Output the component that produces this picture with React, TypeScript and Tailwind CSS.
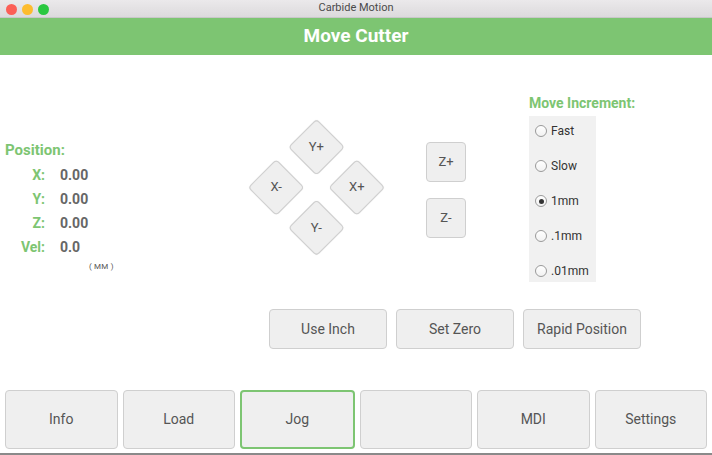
import React from 'react';

const GREEN = 'text-[#7dc572]';

const positions = [
  { label: 'X:', value: '0.00' },
  { label: 'Y:', value: '0.00' },
  { label: 'Z:', value: '0.00' },
  { label: 'Vel:', value: '0.0' },
];

const increments = [
  { label: 'Fast', checked: false },
  { label: 'Slow', checked: false },
  { label: '1mm', checked: true },
  { label: '.1mm', checked: false },
  { label: '.01mm', checked: false },
];

const tabs = ['Info', 'Load', 'Jog', '', 'MDI', 'Settings'];

function Radio({ checked }: { checked: boolean }) {
  return (
    <span className="flex h-[12px] w-[12px] items-center justify-center rounded-full border border-[#9a9a9a] bg-gradient-to-b from-white to-[#f2f2f2]">
      {checked && <span className="h-[5px] w-[5px] rounded-full bg-[#333]" />}
    </span>
  );
}

function Diamond({ label }: { label: string }) {
  return (
    <div className="flex h-[40px] w-[40px] items-center justify-center rounded-[4px] border border-[#cfcfcf] bg-[#efefef] shadow-[0_0_1px_rgba(0,0,0,0.15)]">
      <span className="-rotate-45 text-[13px] text-[#555]">{label}</span>
    </div>
  );
}

export default function App() {
  return (
    <div className="flex h-[455px] w-[712px] flex-col overflow-hidden bg-white font-['Roboto',sans-serif]">
      {/* window title bar */}
      <div className="relative flex h-[18px] shrink-0 items-center justify-center border-b border-[#c9c7c9] bg-gradient-to-b from-[#ebe9eb] to-[#dcdadc]">
        <div className="absolute left-[6px] top-[4px] flex gap-[5px]">
          <span className="h-[11px] w-[11px] rounded-full bg-[#fc5f57]" />
          <span className="h-[11px] w-[11px] rounded-full bg-[#fdbc2e]" />
          <span className="h-[11px] w-[11px] rounded-full bg-[#2ac840]" />
        </div>
        <span className="text-[11px] text-[#4a4a4a]">Carbide Motion</span>
      </div>

      {/* header */}
      <div className="flex h-[37px] shrink-0 items-center justify-center bg-[#7dc572]">
        <span className="text-[19px] font-bold text-white">Move Cutter</span>
      </div>

      {/* main area */}
      <div className="flex h-[254px] shrink-0">
        {/* position readout */}
        <div className="w-[245px] pl-[5px] pt-[85px]">
          <div className={`mb-[3px] h-[20px] text-[15px] font-bold leading-[20px] ${GREEN}`}>Position:</div>
          {positions.map((p) => (
            <div key={p.label} className="flex h-[24px] items-center">
              <span className={`w-[40px] text-right text-[14px] font-bold ${GREEN}`}>{p.label}</span>
              <span className="ml-[15px] text-[14px] font-bold text-[#666]">{p.value}</span>
            </div>
          ))}
          <div className="ml-[84px] mt-[2px] h-[12px] text-[8px] leading-[12px] tracking-wide text-[#555]">( MM )</div>
        </div>

        {/* XY jog diamond */}
        <div className="mt-[64px] flex h-[137px] w-[142px] items-center justify-center">
          <div className="grid rotate-45 grid-cols-2 gap-[17px]">
            <Diamond label="Y+" />
            <Diamond label="X+" />
            <Diamond label="X-" />
            <Diamond label="Y-" />
          </div>
        </div>

        {/* Z jog */}
        <div className="ml-[39px] mt-[87px] flex flex-col gap-[16px]">
          {['Z+', 'Z-'].map((z) => (
            <div
              key={z}
              className="flex h-[40px] w-[40px] items-center justify-center rounded-[4px] border border-[#cfcfcf] bg-[#efefef] text-[13px] text-[#555]"
            >
              {z}
            </div>
          ))}
        </div>

        {/* move increment */}
        <div className="ml-[63px] mt-[40px]">
          <div className={`h-[16px] text-[14px] font-bold leading-[16px] ${GREEN}`}>Move Increment:</div>
          <div className="mt-[5px] flex w-[67px] flex-col gap-[21px] bg-[#f1f1f1] pb-[4px] pl-[6px] pt-[8px]">
            {increments.map((i) => (
              <div key={i.label} className="flex h-[14px] items-center gap-[4px]">
                <Radio checked={i.checked} />
                <span className="text-[12px] text-[#333]">{i.label}</span>
              </div>
            ))}
          </div>
        </div>
      </div>

      {/* action buttons */}
      <div className="flex h-[40px] shrink-0 gap-[9px] pl-[269px]">
        {['Use Inch', 'Set Zero', 'Rapid Position'].map((b) => (
          <div
            key={b}
            className="flex w-[118px] items-center justify-center rounded-[4px] border border-[#cfcfcf] bg-[#efefef] text-[14px] text-[#555]"
          >
            {b}
          </div>
        ))}
      </div>

      {/* bottom tabs */}
      <div className="mt-[41px] flex h-[59px] shrink-0 gap-[5px] px-[5px]">
        {tabs.map((t, idx) => (
          <div
            key={idx}
            className={`flex flex-1 items-center justify-center rounded-[4px] bg-[#efefef] text-[14px] text-[#555] ${
              t === 'Jog' ? 'border-2 border-[#7dc572]' : 'border border-[#cfcfcf]'
            }`}
          >
            {t}
          </div>
        ))}
      </div>

      <div className="mt-[4px] h-[2px] shrink-0 bg-[#8a8a8a]" />
    </div>
  );
}
